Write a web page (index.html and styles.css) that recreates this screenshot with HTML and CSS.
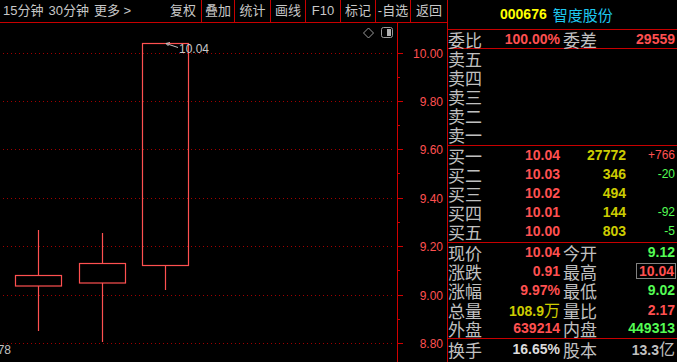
FILE: index.html
```html
<!DOCTYPE html>
<html lang="zh">
<head>
<meta charset="utf-8">
<title>智度股份</title>
<link rel="stylesheet" href="styles.css">
</head>
<body>
<div class="app">
  <div class="left">
    <div class="toolbar">
      <div class="periods"><span>15分钟</span><span>30分钟</span><span>更多 &gt;</span></div>
      <div class="tools">
        <span class="tool t-fq">复权</span>
        <span class="tool t33">叠加</span>
        <span class="tool t36">统计</span>
        <span class="tool t35">画线</span>
        <span class="tool t35">F10</span>
        <span class="tool t35">标记</span>
        <span class="tool t35">-自选</span>
        <span class="tool t37">返回</span>
      </div>
    </div>
    <div class="chart">
      <svg class="kline" width="447" height="339" viewBox="0 23 447 339">
        <g class="grid">
          <line x1="3" y1="53.5" x2="394" y2="53.5"/>
          <line x1="3" y1="101.5" x2="394" y2="101.5"/>
          <line x1="3" y1="149.5" x2="394" y2="149.5"/>
          <line x1="3" y1="198.5" x2="394" y2="198.5"/>
          <line x1="3" y1="246.5" x2="394" y2="246.5"/>
          <line x1="3" y1="295.5" x2="394" y2="295.5"/>
          <line x1="3" y1="343.5" x2="394" y2="343.5"/>
        </g>
        <g class="axis">
          <line x1="397.5" y1="23" x2="397.5" y2="362"/>
          <line x1="397" y1="53.5" x2="403" y2="53.5"/>
          <line x1="397" y1="101.5" x2="403" y2="101.5"/>
          <line x1="397" y1="149.5" x2="403" y2="149.5"/>
          <line x1="397" y1="198.5" x2="403" y2="198.5"/>
          <line x1="397" y1="246.5" x2="403" y2="246.5"/>
          <line x1="397" y1="295.5" x2="403" y2="295.5"/>
          <line x1="397" y1="343.5" x2="403" y2="343.5"/>
          <line x1="397" y1="77.5" x2="400" y2="77.5"/>
          <line x1="397" y1="125.5" x2="400" y2="125.5"/>
          <line x1="397" y1="173.5" x2="400" y2="173.5"/>
          <line x1="397" y1="222.5" x2="400" y2="222.5"/>
          <line x1="397" y1="270.5" x2="400" y2="270.5"/>
          <line x1="397" y1="319.5" x2="400" y2="319.5"/>
        </g>
        <g class="ylabels">
          <text x="443" y="57.5">10.00</text>
          <text x="443" y="105.5">9.80</text>
          <text x="443" y="153.5">9.60</text>
          <text x="443" y="202.5">9.40</text>
          <text x="443" y="250.5">9.20</text>
          <text x="443" y="299.5">9.00</text>
          <text x="443" y="347.5">8.80</text>
        </g>
        <g class="candles">
          <line x1="38.5" y1="230" x2="38.5" y2="275"/>
          <line x1="38.5" y1="286" x2="38.5" y2="331"/>
          <rect x="15.5" y="275.5" width="46" height="10.5"/>
          <line x1="102.5" y1="233" x2="102.5" y2="263"/>
          <line x1="102.5" y1="283" x2="102.5" y2="342"/>
          <rect x="79.5" y="263.5" width="46" height="19.5"/>
          <line x1="165.5" y1="266" x2="165.5" y2="290"/>
          <rect x="142.5" y="43.5" width="46" height="222"/>
        </g>
        <g class="note">
          <path d="M166 43.5 L178 47.5 M166 43.5 L170 42.5 M166 43.5 L168.5 46"/>
          <text x="179" y="53">10.04</text>
        </g>
        <g class="icons">
          <path class="ico" d="M368.5 28 L373.5 33 L368.5 38 L363.5 33 Z"/>
          <rect class="ico" x="381.5" y="27.5" width="11" height="10" rx="2"/>
          <rect class="ico-fill" x="387" y="29" width="4" height="7"/>
        </g>
        <text class="corner" x="11" y="354">78</text>
      </svg>
    </div>
  </div>
  <div class="panel">
    <div class="title"><span class="code">000676</span><span class="name">智度股份</span></div>
    <div class="sec weibi">
      <div class="row s"><span class="lb">委比</span><span class="num red">100.00%</span><span class="lb lb2">委差</span><span class="num red">29559</span></div>
    </div>
    <div class="sec book">
      <div class="row q"><span class="lb">卖五</span><span></span><span></span><span></span></div>
      <div class="row q"><span class="lb">卖四</span><span></span><span></span><span></span></div>
      <div class="row q"><span class="lb">卖三</span><span></span><span></span><span></span></div>
      <div class="row q"><span class="lb">卖二</span><span></span><span></span><span></span></div>
      <div class="row q"><span class="lb">卖一</span><span></span><span></span><span></span></div>
    </div>
    <div class="sec book">
      <div class="row q"><span class="lb">买一</span><span class="num red">10.04</span><span class="num yel">27772</span><span class="chg red">+766</span></div>
      <div class="row q"><span class="lb">买二</span><span class="num red">10.03</span><span class="num yel">346</span><span class="chg grn">-20</span></div>
      <div class="row q"><span class="lb">买三</span><span class="num red">10.02</span><span class="num yel">494</span><span class="chg"></span></div>
      <div class="row q"><span class="lb">买四</span><span class="num red">10.01</span><span class="num yel">144</span><span class="chg grn">-92</span></div>
      <div class="row q"><span class="lb">买五</span><span class="num red">10.00</span><span class="num yel">803</span><span class="chg grn">-5</span></div>
    </div>
    <div class="sec stats">
      <div class="row s"><span class="lb">现价</span><span class="num red">10.04</span><span class="lb lb2">今开</span><span class="num grn">9.12</span></div>
      <div class="row s"><span class="lb">涨跌</span><span class="num red">0.91</span><span class="lb lb2">最高</span><span class="num red"><span class="box">10.04</span></span></div>
      <div class="row s"><span class="lb">涨幅</span><span class="num red">9.97%</span><span class="lb lb2">最低</span><span class="num grn">9.02</span></div>
      <div class="row s"><span class="lb">总量</span><span class="num yel">108.9<span class="cjk">万</span></span><span class="lb lb2">量比</span><span class="num red">2.17</span></div>
      <div class="row s"><span class="lb">外盘</span><span class="num red">639214</span><span class="lb lb2">内盘</span><span class="num grn">449313</span></div>
    </div>
    <div class="sec last">
      <div class="row s tall"><span class="lb">换手</span><span class="num wht">16.65%</span><span class="lb lb2">股本</span><span class="num gry">13.3<span class="cjk">亿</span></span></div>
    </div>
  </div>
</div>
</body>
</html>
```

FILE: styles.css
```css
* { box-sizing: border-box; }
html, body { margin: 0; padding: 0; background: #000; }
body {
  width: 677px;
  height: 362px;
  overflow: hidden;
  font-family: "Liberation Sans", "Noto Sans CJK SC", sans-serif;
  color: #c0c0c0;
}
.app { display: flex; width: 677px; height: 362px; }
.left { width: 447px; display: flex; flex-direction: column; }

.toolbar {
  display: flex;
  height: 23px;
  border-bottom: 1px solid #c80000;
  font-size: 13px;
  line-height: 22px;
  color: #c8c8c8;
}
.periods { flex: 1; display: flex; gap: 5px; padding-left: 3px; white-space: nowrap; }
.tools { display: flex; }
.tool { display: block; text-align: center; height: 22px; border-left: 1px solid #c80000; white-space: nowrap; }
.t-fq { width: 36px; border-left: none; }
.t33 { width: 33px; }
.t35 { width: 35px; }
.t36 { width: 36px; }
.t37 { width: 37px; }

.chart { height: 339px; }
.kline { display: block; }
.grid line { stroke: #a00000; stroke-width: 1; stroke-dasharray: 1 3; }
.axis line { stroke: #d00000; stroke-width: 1; }
.ylabels text { fill: #ff5050; font-family: "Liberation Sans", sans-serif; font-size: 12px; text-anchor: end; }
.candles line, .candles rect { stroke: #ff5050; stroke-width: 1.2; fill: none; }
.note path { stroke: #c0c0c0; stroke-width: 1; fill: none; }
.note text { fill: #c8c8c8; font-family: "Liberation Sans", sans-serif; font-size: 12px; }
.ico { fill: none; stroke: #9a9a9a; stroke-width: 1; }
.ico-fill { fill: #b0b0b0; }
.corner { fill: #c0c0c0; font-family: "Liberation Sans", sans-serif; font-size: 12px; text-anchor: end; }

.panel {
  width: 230px;
  border-left: 1px solid #c80000;
  padding-right: 2px;
  display: flex;
  flex-direction: column;
}
.title {
  height: 30px;
  border-bottom: 1px solid #c80000;
  margin-right: -2px;
  display: flex;
  align-items: center;
  gap: 6px;
  padding-left: 52px;
  padding-bottom: 1px;
}
.code { color: #ffff00; font-weight: bold; font-size: 14px; }
.name { color: #1ec8f0; font-size: 15px; font-family: "Noto Sans CJK SC", sans-serif; }

.sec { border-bottom: 1px solid #c80000; margin-right: -2px; padding-right: 2px; }
.weibi .row { height: 18px; }
.book { padding-bottom: 1px; }
.last { border-bottom: none; }

.row { display: grid; height: 19px; align-items: center; white-space: nowrap; }
.row.q { grid-template-columns: 36px 76px 66px 1fr; }
.row.s { grid-template-columns: 36px 76px 40px 1fr; }
.row.tall { height: 21px; }

.lb { font-family: "Noto Sans CJK SC", sans-serif; font-size: 17px; line-height: 19px; color: #c0c0c0; }
.lb2 { padding-left: 3px; }
.num { text-align: right; font-weight: bold; font-size: 14px; line-height: 19px; }
.chg { text-align: right; font-size: 12px; line-height: 19px; }
.cjk { font-family: "Noto Sans CJK SC", sans-serif; font-weight: normal; font-size: 16px; }

.red { color: #ff5050; }
.grn { color: #54fc54; }
.yel { color: #cccc00; }
.wht { color: #dcdcdc; }
.gry { color: #c0c0c0; }

.box {
  display: inline-block;
  border: 1px solid #808080;
  padding: 0 1px 0 2px;
  line-height: 14px;
  margin-right: -1px;
}
```
